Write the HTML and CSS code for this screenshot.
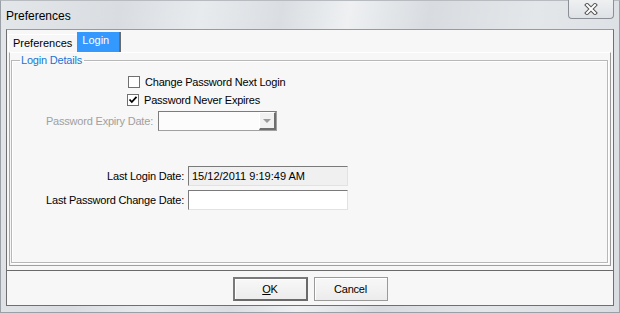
FILE: index.html
```html
<!DOCTYPE html>
<html>
<head>
<meta charset="utf-8">
<link rel="stylesheet" href="styles.css">
</head>
<body>
<div class="window">
  <div class="titlebar">
    <div class="title">Preferences</div>
    <div class="close">
      <svg width="14" height="12" viewBox="0 0 14 12">
        <path d="M3 2 L11 10 M11 2 L3 10" stroke="#555" stroke-width="4" stroke-linecap="square" fill="none"/>
        <path d="M3 2 L11 10 M11 2 L3 10" stroke="#fff" stroke-width="2" stroke-linecap="square" fill="none"/>
      </svg>
    </div>
  </div>
  <div class="client">
    <div class="tabarea">
      <div class="tabstrip">
        <div class="tab">Preferences</div>
        <div class="tab active">Login</div>
      </div>
      <div class="tabpage">
        <fieldset class="group">
          <legend class="legend">Login Details</legend>
          <div class="row check-row first">
            <span class="checkbox"></span>
            <span class="ctext">Change Password Next Login</span>
          </div>
          <div class="row check-row second">
            <span class="checkbox">
              <svg width="10" height="10" viewBox="0 0 10 10"><path d="M1.5 4.5 L3.8 7 L8.5 1.8" stroke="#000" stroke-width="1.8" fill="none"/></svg>
            </span>
            <span class="ctext">Password Never Expires</span>
          </div>
          <div class="row combo-row">
            <span class="label disabled expiry-label">Password Expiry Date:</span>
            <div class="combo">
              <div class="combo-field"></div>
              <div class="combo-btn"><span class="arrow"></span></div>
            </div>
          </div>
          <div class="row text-row login-row">
            <span class="label wide-label">Last Login Date:</span>
            <div class="textbox readonly">15/12/2011 9:19:49 AM</div>
          </div>
          <div class="row text-row change-row">
            <span class="label wide-label">Last Password Change Date:</span>
            <div class="textbox"></div>
          </div>
        </fieldset>
      </div>
    </div>
    <div class="buttonbar">
      <div class="button default"><span class="u">O</span>K</div>
      <div class="button">Cancel</div>
    </div>
  </div>
</div>
</body>
</html>
```

FILE: styles.css
```css
* { box-sizing: border-box; }
html, body { margin: 0; padding: 0; }
body {
  width: 620px;
  height: 313px;
  overflow: hidden;
  font-family: "Liberation Sans", Arial, sans-serif;
  font-size: 11px;
  letter-spacing: -0.2px;
  color: #000;
}
.window {
  width: 620px;
  height: 313px;
  display: flex;
  flex-direction: column;
  background: linear-gradient(100deg, #e3e7ea 0%, #d9dde1 18%, #e8ebee 30%, #dadee2 42%, #eef0f2 52%, #d8dce0 64%, #e4e7ea 80%, #d9dde1 100%);
  border: 1px solid #9aa0a6;
  border-top-color: #b8bcc0;
}
.titlebar {
  height: 28px;
  display: flex;
  justify-content: space-between;
  align-items: flex-start;
  padding-left: 5px;
}
.title {
  font-size: 12px;
  letter-spacing: 0;
  line-height: 14px;
  margin-top: 8px;
  color: #000;
}
.close {
  width: 46px;
  height: 19px;
  margin-top: -1px;
  margin-right: 5px;
  border: 1px solid #8c9096;
  border-top: none;
  border-radius: 0 0 4px 4px;
  background: linear-gradient(#eef0f2, #dfe2e5);
  display: flex;
  align-items: center;
  justify-content: center;
}
.client {
  flex: 1;
  margin: 0 5px 6px 5px;
  border: 1px solid #6f6f6f;
  border-top-color: #9a9a9a;
  background: #f7f7f7;
  display: flex;
  flex-direction: column;
}
.tabarea {
  height: 240px;
  padding: 2px 2px 4px 2px;
  display: flex;
  flex-direction: column;
}
.tabstrip {
  height: 20px;
  display: flex;
  align-items: flex-end;
  margin-left: -1px;
  letter-spacing: 0;
}
.tab {
  height: 18px;
  line-height: 16px;
  padding: 0 5px 0 4px;
  border-left: 1px solid #ffffff;
  border-top: 1px solid #ffffff;
}
.tab.active {
  height: 20px;
  line-height: 17px;
  background: #3399ff;
  color: #fff;
  border: none;
  border-right: 2px solid #6a6a6a;
  padding: 0 10px 0 5px;
}
.tabpage {
  flex: 1;
  border: 1px solid #a0a0a0;
  border-top-color: #ffffff;
  border-left-color: #a8a8a8;
  border-right-color: #9a9a9a;
  border-bottom-color: #a0a0a0;
  padding: 1px 2px 2px 1px;
  display: flex;
}
.group {
  flex: 1;
  margin: 0;
  padding: 0;
  min-width: 0;
  border: 1px solid #b8b8b8;
  box-shadow: inset 1px 1px 0 #ffffff, 1px 1px 0 #ffffff;
}
.legend {
  color: #1a73d6;
  padding: 0 2px 0 1px;
  margin-left: 8px;
  line-height: 13px;
  font-size: 11px;
}
.row {
  display: flex;
  align-items: center;
}
.check-row { height: 18px; }
.check-row.first { margin-top: 6px; padding-left: 116px; }
.check-row.second { padding-left: 115px; }
.checkbox {
  width: 12px;
  height: 12px;
  border: 1px solid #707070;
  background: #fff;
  display: flex;
  align-items: center;
  justify-content: center;
  margin-right: 5px;
}
.combo-row {
  height: 20px;
  margin-top: 2px;
}
.label {
  text-align: right;
  white-space: nowrap;
}
.disabled { color: #a0a0a0; }
.expiry-label { width: 141px; margin-right: 5px; }
.combo {
  width: 119px;
  height: 20px;
  display: flex;
  border: 1px solid #a0a0a0;
  border-top-color: #7c7c7c;
  border-left-color: #7c7c7c;
  background: #fcfcfc;
}
.combo-field { flex: 1; }
.combo-btn {
  width: 17px;
  background: #f1f1f1;
  border-left: 1px solid #ffffff;
  border-top: 1px solid #ffffff;
  border-right: 2px solid #6e6e6e;
  border-bottom: 2px solid #6e6e6e;
  display: flex;
  align-items: center;
  justify-content: center;
}
.arrow {
  width: 0;
  height: 0;
  border-left: 4px solid transparent;
  border-right: 4px solid transparent;
  border-top: 4px solid #9a9a9a;
}
.text-row { height: 20px; }
.login-row { margin-top: 35px; }
.change-row { margin-top: 4px; }
.wide-label { width: 172px; margin-right: 4px; }
.textbox {
  width: 160px;
  height: 20px;
  border: 1px solid #e2e2e2;
  border-top-color: #7a7a7a;
  border-left-color: #7a7a7a;
  background: #fff;
  padding-left: 3px;
  line-height: 18px;
  font-size: 11px;
  letter-spacing: 0;
}
.textbox.readonly { background: #f0f0f0; }
.buttonbar {
  flex: 1;
  border-top: 1px solid #6a6a6a;
  display: flex;
  justify-content: center;
  align-items: flex-start;
  padding-top: 6px;
  gap: 6px;
}
.button {
  width: 74px;
  height: 24px;
  border: 1px solid #9a9a9a;
  background: linear-gradient(#f8f8f8, #ececec);
  display: flex;
  align-items: center;
  justify-content: center;
  box-shadow: inset 1px 1px 0 #ffffff;
}
.button.default {
  width: 75px;
  border: 2px solid #6a6a6a;
  border-top-color: #7a7a7a;
  border-left-color: #7a7a7a;
}
.u { text-decoration: underline; }
```
